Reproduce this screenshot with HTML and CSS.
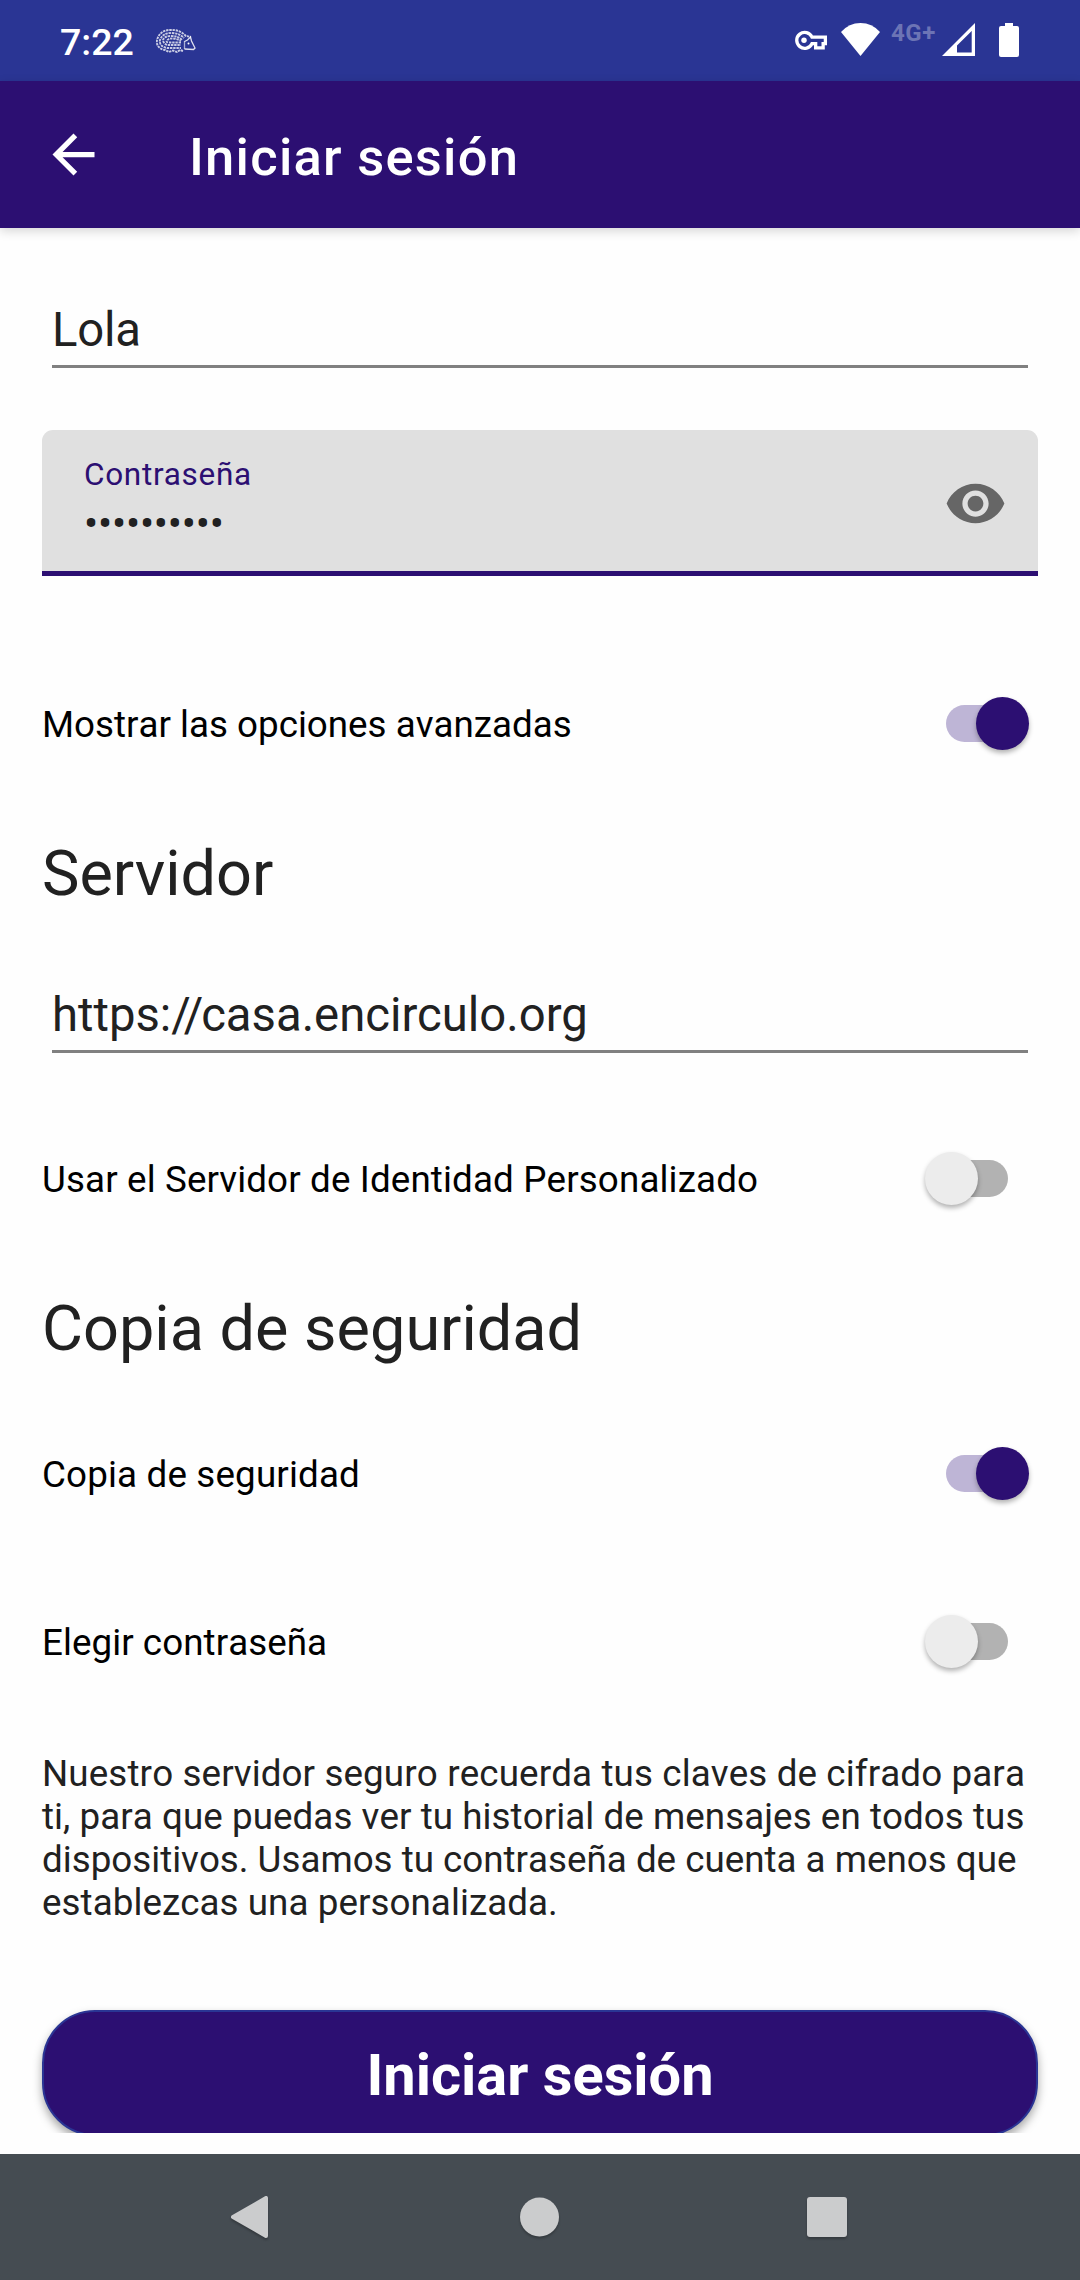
FILE: index.html
```
<!DOCTYPE html>
<html lang="es">
<head>
<meta charset="utf-8">
<title>Iniciar sesión</title>
<link rel="stylesheet" href="styles.css">
</head>
<body>
<div class="screen">
  <div class="status">
    <span class="clock">7:22</span>
    <svg class="hedgehog" viewBox="0 0 40 24" fill="none" stroke="#fff">
      <g stroke-width="1.900" stroke-dasharray="2.400 .8" opacity=".75">
        <path d="M27 22l-3-1-3 2-4-1.500-4 1.500-4-2C3 20 0 16 1 11 3 4 8 1 14 1c7-.5 12 2 16 6l5 1"/>
        <path d="M25 19H11C6 18 3 15 4 11 6 6 10 4 15 4c6 0 10 2 13 5" stroke-dashoffset="1"/>
        <path d="M25 16H12c-3 0-5-3-5-5 1-3 4-4 8-4 5 0 8 1 11 4" stroke-dashoffset="2"/>
        <path d="M25 13.500H13c-2 0-3-1-2-2 1-1.500 3-2 5-2 3 0 6 1 9 2"/>
      </g>
      <path d="M28.500 12.500l3-1.500 3-3 1 4 3.500 7-1.500 1.500-9-.5" stroke-width="1.300" opacity=".85"/>
      <path d="M28.500 12v8" stroke-width="1.300" opacity=".6"/>
      <circle cx="32.500" cy="14.500" r="1" fill="#fff" stroke="none"/>
    </svg>
    <span class="spacer"></span>
    <svg class="key" viewBox="0 0 35 21" fill="none" stroke="#fff" stroke-width="3.400">
      <path d="M18.500 7H32.300v6.700H30v4.300h-7.700v-4.300h-3.800A8.200 8.200 0 1 1 18.500 7z"/>
      <circle cx="10.300" cy="10.300" r="2.800" fill="#fff" stroke="none"/>
    </svg>
    <svg class="wifi" viewBox="0 0 39 33"><path fill="#fff" d="M0 9Q8 0 19.500 0T39 9L19.500 33z"/></svg>
    <span class="net">4G+</span>
    <svg class="signal" viewBox="0 0 33 33"><path fill="#fff" fill-rule="evenodd" d="M0 33L33 0v33zM15 22.500V29.500h14.700V8z"/></svg>
    <svg class="battery" viewBox="0 0 20 34"><path fill="#fff" d="M6 0h8v3h4q2 0 2 2v27q0 2-2 2H2q-2 0-2-2V5q0-2 2-2h4z"/></svg>
  </div>

  <header class="appbar">
    <svg class="back" viewBox="0 0 24 24"><path fill="#fff" d="M20 11H7.830l5.590-5.590L12 4l-8 8 8 8 1.410-1.410L7.830 13H20v-2z"/></svg>
    <h1>Iniciar sesión</h1>
  </header>

  <main>
    <div class="field user">Lola</div>
    <div class="password">
      <div class="pw-text">
        <label>Contraseña</label>
        <span class="dots">••••••••••</span>
      </div>
      <svg class="eye" viewBox="0 0 24 24"><path fill="#666" d="M12 4.500C7 4.500 2.730 7.610 1 12c1.730 4.390 6 7.500 11 7.500s9.270-3.110 11-7.500c-1.730-4.390-6-7.500-11-7.500zM12 17c-2.760 0-5-2.240-5-5s2.240-5 5-5 5 2.240 5 5-2.240 5-5 5zm0-8c-1.660 0-3 1.340-3 3s1.340 3 3 3 3-1.340 3-3-1.340-3-3-3z"/></svg>
    </div>
    <div class="row advanced"><span>Mostrar las opciones avanzadas</span><i class="switch on"><b></b></i></div>
    <h2>Servidor</h2>
    <div class="field url">https:<span class="slashes">//</span>casa.encirculo.org</div>
    <div class="row identity"><span>Usar el Servidor de Identidad Personalizado</span><i class="switch"><b></b></i></div>
    <h2>Copia de seguridad</h2>
    <div class="row backup"><span>Copia de seguridad</span><i class="switch on"><b></b></i></div>
    <div class="row choose"><span>Elegir contraseña</span><i class="switch"><b></b></i></div>
    <p><span class="loose">Nuestro servidor seguro recuerda tus claves de cifrado para</span><br><span class="snug">ti, para que puedas ver tu historial de mensajes en todos tus</span><br>dispositivos. Usamos tu contraseña de cuenta a menos que<br><span class="snug">establezcas una personalizada.</span></p>
    <button>Iniciar sesión</button>
  </main>

  <nav>
    <svg viewBox="0 0 44 48"><path fill="#cbcccd" stroke="#cbcccd" stroke-width="4" stroke-linejoin="round" d="M2 24L35 5v38z"/></svg>
    <svg viewBox="0 0 44 48"><circle cx="21.500" cy="24" r="19.500" fill="#cbcccd"/></svg>
    <svg viewBox="0 0 44 48"><rect x="2" y="4" width="40" height="40" rx="3" fill="#cbcccd"/></svg>
  </nav>
</div>
</body>
</html>
```
FILE: styles.css
```
* { box-sizing: border-box; }
body { margin: 0; background: #fefefe; font-family: Roboto, "Liberation Sans", sans-serif; }
h1, h2, p { margin: 0; font-weight: 400; }
svg { display: block; flex: none; }

.screen { width: 1080px; height: 2280px; display: flex; flex-direction: column; overflow: hidden; }

.status { height: 81px; flex: none; background: #2a3594; display: flex; align-items: flex-start; padding: 0 61px 0 60px; color: #fff; }
.clock { width: 96px; font-size: 37.500px; font-weight: 500; line-height: 44px; padding-top: 20px; }
.hedgehog { width: 40px; height: 24px; margin-top: 29px; }
.spacer { flex: 1; }
.key { width: 34px; height: 21px; margin: 30px 13px 0 0; }
.wifi { width: 39px; height: 33px; margin: 23px 11px 0 0; }
.net { width: 51px; font-size: 24px; font-weight: 700; line-height: 28px; margin-top: 19px; letter-spacing: .6px; color: #6c74b5; }
.signal { width: 33px; height: 33px; margin: 23px 24px 0 0; }
.battery { width: 20px; height: 34px; margin-top: 23px; }

.appbar { height: 147px; flex: none; background: #2c0f72; display: flex; align-items: center; padding-left: 42px; gap: 84px; color: #fff; position: relative; z-index: 1; box-shadow: 0 3px 10px rgba(0, 0, 0, .16); }
.back { width: 63px; height: 63px; }
h1 { font-size: 52.500px; font-weight: 500; line-height: 62px; padding-top: 5px; letter-spacing: 1.250px; }

main { height: 1905px; flex: none; overflow: hidden; padding: 0 42px; color: #212121; }
.field { margin: 0 10px; border-bottom: 3px solid #808080; font-size: 47.250px; line-height: 56px; }
.user { padding: 74px 0 7px; letter-spacing: -.2px; }
.url { padding: 76px 0 7px; }
.slashes { letter-spacing: -2px; }

.password { height: 146px; margin-top: 62px; padding: 0 31px 0 42px; background: #e0e0e0; border-bottom: 5px solid #2c0f72; border-radius: 11px 11px 0 0; display: flex; align-items: flex-start; justify-content: space-between; }
.pw-text { display: flex; flex-direction: column; padding-top: 27px; }
label { font-size: 31.500px; line-height: 36px; color: #2c0f72; letter-spacing: .7px; }
.dots { font-size: 42px; line-height: 50px; margin-top: 6px; letter-spacing: -.2px; }
.eye { width: 63px; height: 63px; margin-top: 42px; }

.row { height: 126px; display: flex; align-items: center; justify-content: space-between; padding-right: 9px; font-size: 36.750px; font-kerning: none; line-height: 44px; color: #000; }
.row span { padding-top: 3px; }
.advanced { margin-top: 84px; }
.identity { margin-top: 62px; letter-spacing: .14px; }
.backup { margin-top: 44px; letter-spacing: .16px; }
.choose { margin-top: 42px; letter-spacing: .06px; }
h2 { font-size: 63px; line-height: 74px; margin-top: 51px; letter-spacing: 0; }

.switch { width: 83px; height: 37px; margin-right: 21px; border-radius: 19px; display: flex; align-items: center; background: linear-gradient(#b2b2b2, #b2b2b2) no-repeat right / 57px 100%; }
.switch b { width: 53px; height: 53px; border-radius: 50%; background: #ececec; box-shadow: 0 3px 5px rgba(0, 0, 0, .3); }
.switch.on { margin-right: 0; justify-content: flex-end; background: linear-gradient(#beb5d6, #beb5d6) no-repeat left / 57px 100%; }
.switch.on b { background: #2c0f72; }

p { font-size: 36.750px; font-kerning: none; line-height: 43px; margin-top: 48px; white-space: nowrap; }
.loose { letter-spacing: .12px; }
.snug { letter-spacing: .06px; }
button { display: block; width: 996px; height: 126px; margin-top: 86px; padding: 4px 0 0; border: 2px solid #2a3594; border-radius: 53px; background: #2c0f72; color: #fff; font: 700 57.750px/68px Roboto, "Liberation Sans", sans-serif; box-shadow: 0 5px 10px rgba(0, 0, 0, .35); }

nav { height: 126px; flex: none; margin-top: 21px; background: #454c52; display: flex; align-items: center; justify-content: center; gap: 243px; }
nav svg { width: 44px; height: 48px; filter: drop-shadow(0 2px 1px rgba(0, 0, 0, .25)); }
```
